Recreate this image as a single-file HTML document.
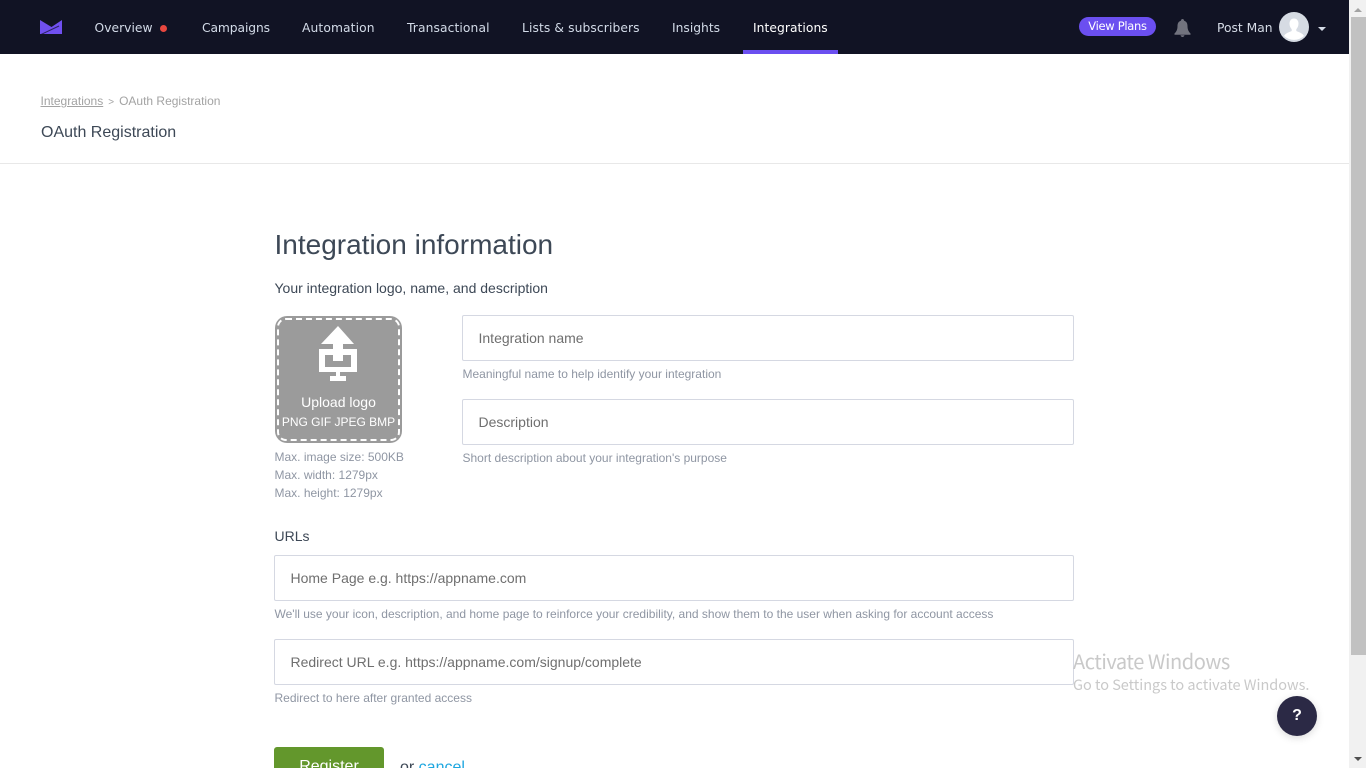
<!DOCTYPE html>
<html><head><meta charset="utf-8"><title>OAuth Registration</title>
<style>
html,body{margin:0;padding:0;width:1366px;height:768px;overflow:hidden;background:#fff;font-family:"Liberation Sans",sans-serif}
#w{position:relative;width:1366px;height:768px;overflow:hidden}
.a{position:absolute;white-space:nowrap}
.nav{top:19px;font:12.3px/18px "DejaVu Sans",sans-serif;color:#d3dbe8}
.input{position:absolute;box-sizing:border-box;height:46px;border:1px solid #d5d8e2;border-radius:2px;background:#fff;font-size:14px;line-height:44px;padding-left:15.5px;color:#6f6f6f;white-space:nowrap}
.hint{position:absolute;white-space:nowrap;font-size:12px;line-height:18px;color:#8f96a3}
</style></head><body><div id="w">
<div class="a" style="left:0;top:0;width:1349px;height:54px;background:#111324"></div>
<svg class="a" style="left:40px;top:20px" width="22" height="14" viewBox="0 0 22 14"><path d="M0 0L11.500 7L22 0V14H0Z" fill="#7050f0"/><path d="M1 14.500L19 6" stroke="#2a2260" stroke-width="1" fill="none"/></svg>
<div class="a nav" style="left:94.500px;letter-spacing:.02px">Overview</div>
<div class="a" style="left:160px;top:25px;width:7px;height:7px;border-radius:50%;background:#e8473f"></div>
<div class="a nav" style="left:202px;letter-spacing:-.1px">Campaigns</div>
<div class="a nav" style="left:302px;letter-spacing:.1px">Automation</div>
<div class="a nav" style="left:407px;letter-spacing:.1px">Transactional</div>
<div class="a nav" style="left:522px;letter-spacing:.1px">Lists &amp; subscribers</div>
<div class="a nav" style="left:672px">Insights</div>
<div class="a nav" style="left:753px;color:#fff;letter-spacing:.05px">Integrations</div>
<div class="a" style="left:743px;top:50px;width:95px;height:4px;background:#6b4ff0"></div>
<div class="a" style="left:1079px;top:17px;width:77px;height:19px;border-radius:10px;background:#6b4ff0;color:#fff;font:11.5px/19px 'DejaVu Sans',sans-serif;text-align:center;letter-spacing:-.3px">View Plans</div>
<svg class="a" style="left:1174px;top:19px" width="17" height="18" viewBox="0 0 17 18"><path d="M8.500 0C7.500 0 7 .7 7 1.600C4.500 2.400 3.500 4.500 3.500 7C3.500 10.500 2.500 12.500 .5 14.500V15.800H16.500V14.500C14.500 12.500 13.500 10.500 13.500 7C13.500 4.500 12.500 2.400 10 1.600C10 .7 9.500 0 8.500 0ZM6.500 16.300C6.800 17.300 7.500 18 8.500 18C9.500 18 10.200 17.300 10.500 16.300Z" fill="#72737e"/></svg>
<div class="a nav" style="left:1217px;color:#d5dbe6">Post Man</div>
<svg class="a" style="left:1279px;top:12px" width="30" height="30" viewBox="0 0 30 30"><circle cx="15" cy="15" r="15" fill="#d6dbe3"/><path d="M15 6.500C12 6.500 10.500 9 10.500 11.500C10.500 14 11.500 16 12.700 17.200V19C10 20.300 6.500 21 5 24A15 15 0 0 0 25 24C23.500 21 20 20.300 17.300 19V17.200C18.500 16 19.500 14 19.500 11.500C19.500 9 18 6.500 15 6.500Z" fill="#fff"/></svg>
<div class="a" style="left:1318px;top:27px;border-left:4px solid transparent;border-right:4px solid transparent;border-top:4px solid #d5dbe6"></div>

<div class="a" style="left:1349px;top:0;width:17px;height:768px;background:#f1f1f1"></div>
<div class="a" style="left:1351px;top:17px;width:15px;height:638px;background:#c1c1c1"></div>
<div class="a" style="left:1354px;top:8px;border-left:4px solid transparent;border-right:4px solid transparent;border-bottom:4px solid #a3a3a3"></div>
<div class="a" style="left:1354px;top:757px;border-left:4px solid transparent;border-right:4px solid transparent;border-top:4px solid #505050"></div>

<div class="a" style="left:40.500px;top:93px;font-size:12px;line-height:16px;color:#a3a3a3"><span style="text-decoration:underline">Integrations</span><span style="margin:0 5px;font-size:10px">&gt;</span>OAuth Registration</div>
<div class="a" style="left:41px;top:123px;font-size:16px;line-height:20px;color:#3d4856">OAuth Registration</div>
<div class="a" style="left:0;top:163px;width:1349px;height:1px;background:#e8e8e8"></div>

<div class="a" style="left:274.500px;top:228px;font-size:28px;line-height:34px;color:#3d4856">Integration information</div>
<div class="a" style="left:274.500px;top:280px;font-size:14px;line-height:17px;color:#3d4856">Your integration logo, name, and description</div>

<div class="a" style="left:275px;top:316px;width:127px;height:127px;border-radius:12px;background:#9b9b9b"></div>
<div class="a" style="left:277px;top:318px;width:119px;height:119px;border:2px dashed #fff;border-radius:9px"></div>
<svg class="a" style="left:318px;top:326px" width="40" height="56" viewBox="0 0 40 56"><path fill-rule="evenodd" d="M20 0L36 18H25V23H39V46H22V50H28V55H12V50H18V46H1V23H15V18H3ZM7 29V41H33V29H25V35H15V29Z" fill="#fff"/></svg>
<div class="a" style="left:275px;top:394px;width:127px;text-align:center;font-size:14px;line-height:17px;color:#fff">Upload logo</div>
<div class="a" style="left:275px;top:414px;width:127px;text-align:center;font-size:12px;line-height:16px;color:#fff">PNG GIF JPEG BMP</div>
<div class="hint" style="left:274.500px;top:448px">Max. image size: 500KB</div>
<div class="hint" style="left:274.500px;top:466px">Max. width: 1279px</div>
<div class="hint" style="left:274.500px;top:484px">Max. height: 1279px</div>

<div class="input" style="left:462px;top:315px;width:612px">Integration name</div>
<div class="hint" style="left:462.500px;top:365px">Meaningful name to help identify your integration</div>
<div class="input" style="left:462px;top:399px;width:612px">Description</div>
<div class="hint" style="left:462.500px;top:449px">Short description about your integration's purpose</div>

<div class="a" style="left:274.500px;top:528px;font-size:14px;line-height:17px;color:#3d4856">URLs</div>
<div class="input" style="left:274px;top:555px;width:800px">Home Page e.g. https://appname.com</div>
<div class="hint" style="left:274.500px;top:605px">We'll use your icon, description, and home page to reinforce your credibility, and show them to the user when asking for account access</div>
<div class="input" style="left:274px;top:639px;width:800px">Redirect URL e.g. https://appname.com/signup/complete</div>
<div class="hint" style="left:274.500px;top:689px">Redirect to here after granted access</div>

<div class="a" style="left:274px;top:747px;width:110px;height:46px;border-radius:3px;background:#63972c;color:#fff;font-size:16px;line-height:40px;text-align:center">Register</div>
<div class="a" style="left:400px;top:758px;font-size:16px;line-height:20px;color:#3d4856">or <span style="color:#1ea7e0">cancel</span></div>

<div class="a" style="left:1073px;top:648px;font:20px/26px 'Noto Sans CJK JP',sans-serif;letter-spacing:-.45px;color:#c9c9c9">Activate Windows</div>
<div class="a" style="left:1073px;top:675px;font:14.500px/20px 'Noto Sans CJK JP',sans-serif;letter-spacing:-.02px;color:#c9c9c9">Go to Settings to activate Windows.</div>
<div class="a" style="left:1277px;top:696px;width:40px;height:40px;border-radius:50%;background:#2b2945;box-shadow:0 2px 8px rgba(0,0,0,.15);color:#fff;font-size:16px;font-weight:bold;line-height:40px;text-align:center">?</div>
</div></body></html>
